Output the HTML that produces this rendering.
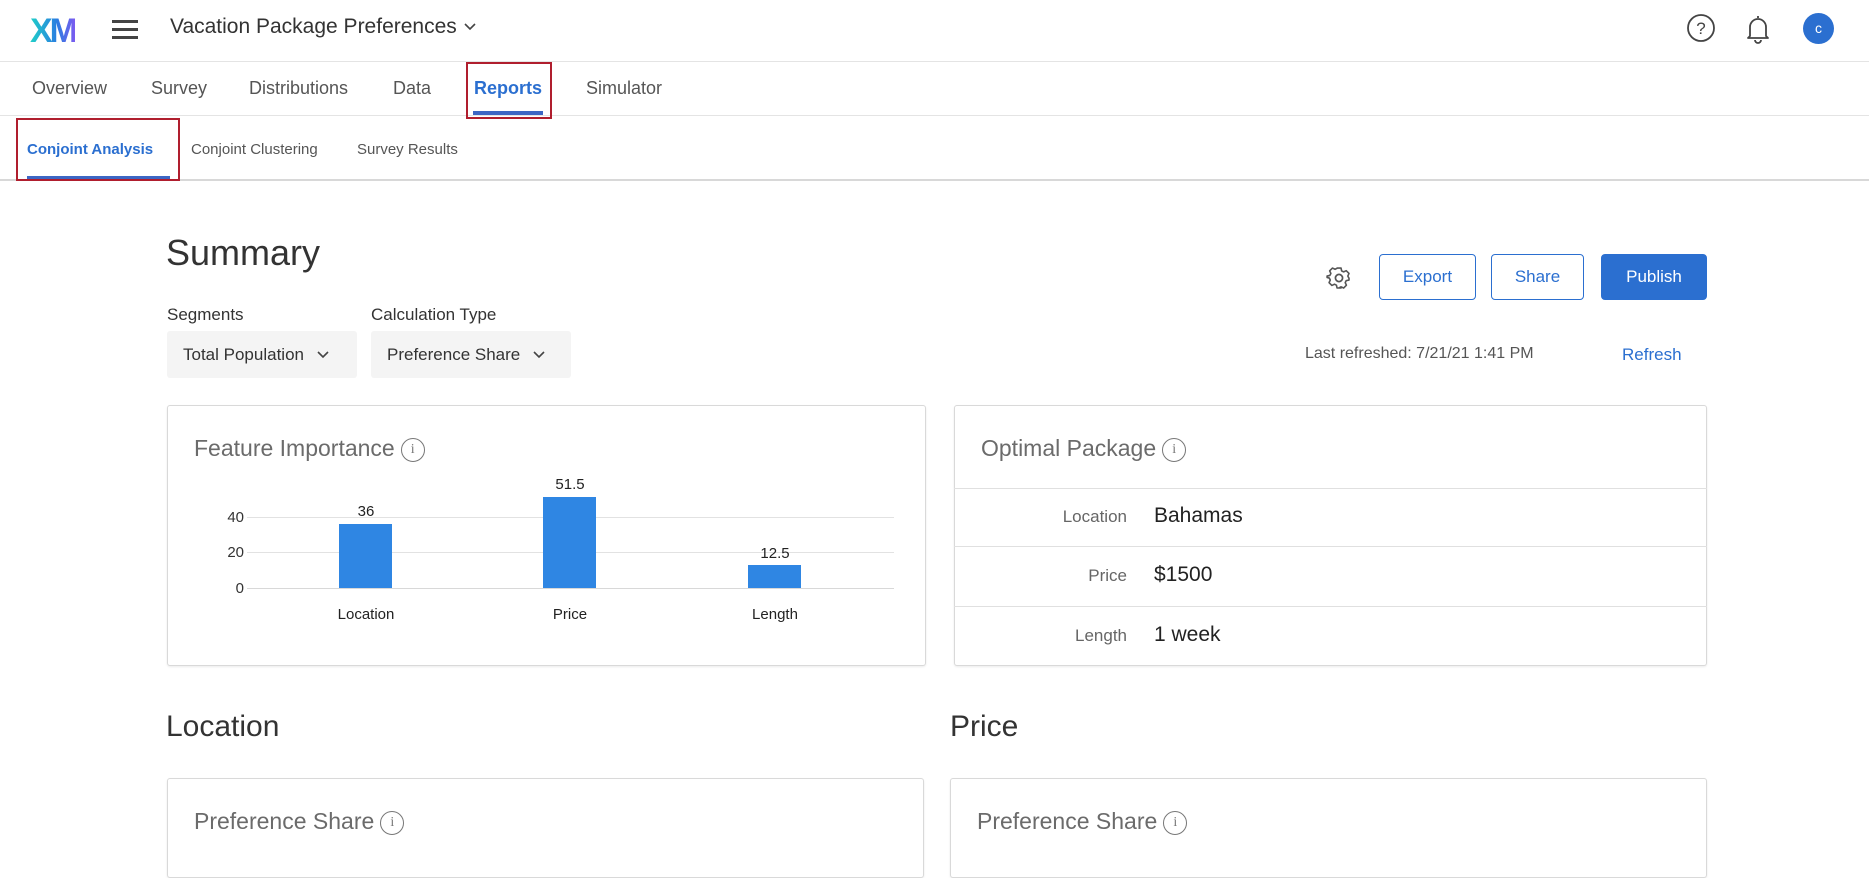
<!DOCTYPE html>
<html><head><meta charset="utf-8"><style>
*{margin:0;padding:0;box-sizing:border-box}
body{width:1869px;height:850px;overflow:hidden;background:#fff;font-family:"Liberation Sans",sans-serif;color:#333;position:relative}
.a{position:absolute;white-space:nowrap}
.line{position:absolute;left:0;width:1869px;height:1px;background:#e4e4e4}
.tab{font-size:18px;color:#555;top:78px}
.sub{font-size:15px;color:#555;top:141px}
.card{position:absolute;border:1px solid #d9d9d9;border-radius:3px;background:#fff;box-shadow:0 1px 2px rgba(0,0,0,.08)}
.btn{position:absolute;top:254px;height:46px;border:1px solid #2b6fd0;border-radius:4px;color:#2b6fd0;font-size:17px;display:flex;align-items:center;justify-content:center}
.dd{position:absolute;top:331px;height:47px;background:#f4f4f4;border-radius:3px;font-size:17px;color:#333;display:flex;align-items:center;padding-left:16px}
.info{display:inline-block;width:24px;height:24px;border:1.5px solid #777;border-radius:50%;font-size:14px;color:#777;text-align:center;line-height:21px;font-family:"Liberation Serif",serif;vertical-align:middle;margin-left:6px}
.ctitle{font-size:23px;color:#6b6b6b}
.grid{position:absolute;left:247px;width:647px;height:1px;background:#e2e2e2}
.bar{position:absolute;background:#2f86e3;width:53px}
.cl{position:absolute;font-size:15px;color:#222;text-align:center;width:80px}
.rl{position:absolute;font-size:17px;color:#666;right:0;text-align:right}
.rv{position:absolute;font-size:21px;color:#222}
.rline{position:absolute;left:954px;width:753px;height:1px;background:#e0e0e0}
</style></head><body>
<!-- header -->
<div class="a" style="left:30px;top:12px;font-size:34px;font-weight:bold;letter-spacing:-3px;background:linear-gradient(90deg,#1fd0c8,#2a7de1 60%,#7b5bf0);-webkit-background-clip:text;color:transparent">XM</div>
<div class="a" style="left:112px;top:20px;width:26px;height:3px;background:#444;box-shadow:0 8px 0 #444,0 16px 0 #444"></div>
<div class="a" style="left:170px;top:15px;font-size:21px;color:#333">Vacation Package Preferences</div>
<svg class="a" style="left:462px;top:21px" width="16" height="12" viewBox="0 0 16 12"><path d="M3 3l5 5 5-5" fill="none" stroke="#444" stroke-width="1.6"/></svg>
<svg class="a" style="left:1686px;top:13px" width="30" height="30" viewBox="0 0 30 30"><circle cx="15" cy="15" r="13" fill="none" stroke="#444" stroke-width="1.8"/><text x="15" y="21" text-anchor="middle" font-size="17" fill="#444" font-family="Liberation Sans">?</text></svg>
<svg class="a" style="left:1745px;top:13px" width="26" height="32" viewBox="0 0 26 32"><path d="M13 3v2M5 23V14a8 8 0 0 1 16 0v9l2 2H3z" fill="none" stroke="#444" stroke-width="1.8" stroke-linejoin="round"/><path d="M10 27a3 3 0 0 0 6 0" fill="none" stroke="#444" stroke-width="1.8"/></svg>
<div class="a" style="left:1803px;top:13px;width:31px;height:31px;border-radius:50%;background:#2b6fd0;color:#fff;font-size:14px;text-align:center;line-height:31px">c</div>
<div class="line" style="top:61px"></div>
<!-- tabs -->
<div class="a tab" style="left:32px">Overview</div>
<div class="a tab" style="left:151px">Survey</div>
<div class="a tab" style="left:249px">Distributions</div>
<div class="a tab" style="left:393px">Data</div>
<div class="a tab" style="left:474px;color:#2b6fd0;font-weight:bold">Reports</div>
<div class="a tab" style="left:586px">Simulator</div>
<div class="a" style="left:473px;top:111px;width:70px;height:4px;background:#3c66c4"></div>
<div class="line" style="top:115px"></div>
<div class="a" style="left:466px;top:62px;width:86px;height:57px;border:2px solid #b01e2e"></div>
<!-- subtabs -->
<div class="a sub" style="left:27px;color:#2b6fd0;font-weight:bold">Conjoint Analysis</div>
<div class="a sub" style="left:191px">Conjoint Clustering</div>
<div class="a sub" style="left:357px">Survey Results</div>
<div class="a" style="left:27px;top:176px;width:143px;height:3px;background:#3c66c4"></div>
<div class="a" style="left:0;top:179px;width:1869px;height:2px;background:#d8d8d8"></div>
<div class="a" style="left:16px;top:118px;width:164px;height:63px;border:2px solid #b01e2e"></div>
<!-- summary -->
<div class="a" style="left:166px;top:232px;font-size:36px;color:#333">Summary</div>
<svg class="a" style="left:1326px;top:265px" width="26" height="26" viewBox="0 0 24 24"><path d="M10 2h4l.6 2.8 2 1 2.6-1.2 2.8 2.8-1.2 2.6 1 2L22 12v0l0 2-2.8.6-1 2 1.2 2.6-2.8 2.8-2.6-1.2-2 1L14 22h-4l-.6-2.8-2-1-2.6 1.2L2 16.6l1.2-2.6-1-2L0 11.4V10l2.8-.6 1-2L2.6 4.8 5.4 2l2.6 1.2 2-1z" transform="translate(1 1) scale(.92)" fill="none" stroke="#555" stroke-width="1.6" stroke-linejoin="round"/><circle cx="12" cy="12" r="3.3" fill="none" stroke="#555" stroke-width="1.6"/></svg>
<div class="btn" style="left:1379px;width:97px">Export</div>
<div class="btn" style="left:1491px;width:93px">Share</div>
<div class="btn" style="left:1601px;width:106px;background:#2b6fd0;color:#fff">Publish</div>
<div class="a" style="left:1305px;top:345px;font-size:16px;color:#555">Last refreshed: 7/21/21 1:41 PM</div>
<div class="a" style="left:1622px;top:345px;font-size:17px;color:#2b6fd0">Refresh</div>
<div class="a" style="left:167px;top:305px;font-size:17px;color:#333">Segments</div>
<div class="a" style="left:371px;top:305px;font-size:17px;color:#333">Calculation Type</div>
<div class="dd" style="left:167px;width:190px">Total Population<svg style="margin-left:12px" width="14" height="10" viewBox="0 0 14 10"><path d="M2 2l5 5 5-5" fill="none" stroke="#444" stroke-width="1.6"/></svg></div>
<div class="dd" style="left:371px;width:200px">Preference Share<svg style="margin-left:12px" width="14" height="10" viewBox="0 0 14 10"><path d="M2 2l5 5 5-5" fill="none" stroke="#444" stroke-width="1.6"/></svg></div>
<!-- feature importance -->
<div class="card" style="left:167px;top:405px;width:759px;height:261px"></div>
<div class="a ctitle" style="left:194px;top:435px">Feature Importance<span class="info">i</span></div>
<div class="grid" style="top:517px"></div>
<div class="grid" style="top:552px"></div>
<div class="grid" style="top:588px;background:#d8d8d8"></div>
<div class="a" style="left:220px;top:509px;font-size:15px;width:24px;text-align:right">40</div>
<div class="a" style="left:220px;top:544px;font-size:15px;width:24px;text-align:right">20</div>
<div class="a" style="left:220px;top:580px;font-size:15px;width:24px;text-align:right">0</div>
<div class="bar" style="left:339px;top:524px;height:64px"></div>
<div class="bar" style="left:543px;top:497px;height:91px"></div>
<div class="bar" style="left:748px;top:565px;height:23px"></div>
<div class="cl" style="left:326px;top:503px">36</div>
<div class="cl" style="left:530px;top:476px">51.5</div>
<div class="cl" style="left:735px;top:545px">12.5</div>
<div class="cl" style="left:326px;top:606px">Location</div>
<div class="cl" style="left:530px;top:606px">Price</div>
<div class="cl" style="left:735px;top:606px">Length</div>
<!-- optimal package -->
<div class="card" style="left:954px;top:405px;width:753px;height:261px"></div>
<div class="a ctitle" style="left:981px;top:435px">Optimal Package<span class="info">i</span></div>
<div class="rline" style="top:488px"></div>
<div class="rline" style="top:546px"></div>
<div class="rline" style="top:606px"></div>
<div class="a" style="left:954px;top:0;width:173px;height:700px">
<div class="rl" style="top:507px">Location</div>
<div class="rl" style="top:566px">Price</div>
<div class="rl" style="top:626px">Length</div>
</div>
<div class="rv a" style="left:1154px;top:504px">Bahamas</div>
<div class="rv a" style="left:1154px;top:563px">$1500</div>
<div class="rv a" style="left:1154px;top:623px">1 week</div>
<!-- lower -->
<div class="a" style="left:166px;top:710px;font-size:30px;color:#333">Location</div>
<div class="a" style="left:950px;top:710px;font-size:30px;color:#333">Price</div>
<div class="card" style="left:167px;top:778px;width:757px;height:100px"></div>
<div class="card" style="left:950px;top:778px;width:757px;height:100px"></div>
<div class="a ctitle" style="left:194px;top:808px">Preference Share<span class="info">i</span></div>
<div class="a ctitle" style="left:977px;top:808px">Preference Share<span class="info">i</span></div>
</body></html>
